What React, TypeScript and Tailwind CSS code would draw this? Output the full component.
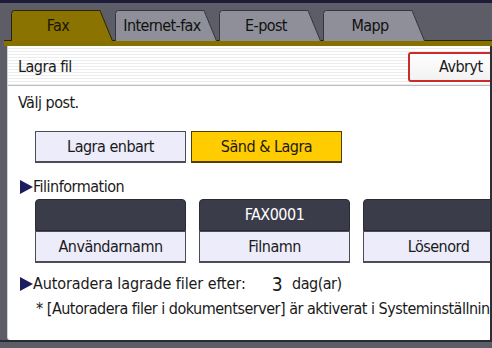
import React from "react";

const font = { fontFamily: '"DejaVu Sans Condensed", "Liberation Sans", sans-serif' };

function Tab({ label, active }: { label: string; active?: boolean }) {
  return (
    <div className="relative w-[102px] h-[30px] flex items-center justify-center pr-[8px]">
      <svg className="absolute inset-0" width="102" height="31" viewBox="0 0 102 31">
        <path
          d="M0.5 31 L0.5 3.5 Q0.5 0.5 3.5 0.5 L89 0.5 L101.5 31"
          fill={active ? "#8a7300" : "#8e8f98"}
          stroke={active ? "#2c2600" : "#35353d"}
          strokeWidth="1"
        />
      </svg>
      <span className={"relative text-[16px] leading-none pt-[2px] tracking-[-0.6px] " + (active ? "text-[#1a1600]" : "text-[#111]")}>{label}</span>
    </div>
  );
}

function Arrow() {
  return (
    <svg width="13" height="14" viewBox="0 0 13 14" className="shrink-0">
      <polygon points="0,0 13,7 0,14" fill="#1c1c60" />
    </svg>
  );
}

export default function App() {
  return (
    <div className="w-[492px] h-[348px] bg-[#5c5d66] overflow-hidden flex flex-col text-[#1a1a1a] tracking-[-0.5px]" style={font}>
      <div className="h-[3px] bg-[#1d1d3a] shrink-0" />
      <div className="h-[37px] shrink-0 flex items-end pl-[11px] gap-[2px]">
        <Tab label="Fax" active />
        <Tab label="Internet-fax" />
        <Tab label="E-post" />
        <Tab label="Mapp" />
      </div>
      <div className="h-[6px] shrink-0 ml-[4px] bg-[#857000] border-t border-[#2a2500]" />
      <div className="ml-[7px] w-[485px] h-[294px] shrink-0 bg-white border-l border-[#d0d0d8] border-r-2 border-r-[#2e2e34] overflow-hidden flex flex-col rounded-bl-[3px]">
        <div className="h-[40px] shrink-0 flex items-start bg-[repeating-linear-gradient(to_bottom,#ffffff_0px,#ffffff_2px,#ececec_2px,#ececec_3px)] border-b border-[#bdbdbd]">
          <div className="w-[400px] shrink-0 pl-[10px] pt-[11px] text-[16px] leading-[20px]">Lagra fil</div>
          <div className="mt-[6px] w-[104px] h-[30px] shrink-0 rounded-[3px] border-2 border-[#cc2b2b] bg-gradient-to-b from-white to-[#f2f2f2] flex items-center pl-[29px] text-[16px]">
            Avbryt
          </div>
        </div>
        <div className="pl-[10px] mt-[7px] text-[16px] leading-[20px]">Välj post.</div>
        <div className="flex gap-[5px] pl-[27px] mt-[18px]">
          <div className="w-[151px] h-[32px] border border-b-2 border-[#4c4c58] bg-[#ececfa] flex items-center justify-center text-[16px]">
            Lagra enbart
          </div>
          <div className="w-[151px] h-[32px] border border-b-2 border-[#4d4000] bg-[#ffcc00] flex items-center justify-center text-[16px]">
            Sänd &amp; Lagra
          </div>
        </div>
        <div className="flex items-center pl-[12px] mt-[14px] h-[20px] text-[16px]">
          <Arrow />
          <span>Filinformation</span>
        </div>
        <div className="flex gap-[13px] pl-[27px] mt-[2px]">
          {[
            ["", "Användarnamn"],
            ["FAX0001", "Filnamn"],
            ["", "Lösenord"],
          ].map(([v, l]) => (
            <div key={l} className="w-[151px] shrink-0 flex flex-col">
              <div className="h-[32px] rounded-t-[4px] bg-[#3b3c4a] border border-[#2a2a36] flex items-center justify-center text-white text-[16px]">
                {v}
              </div>
              <div className="h-[32px] border border-b-2 border-[#4c4c58] bg-[#ececfa] flex items-center justify-center text-[16px]">
                {l}
              </div>
            </div>
          ))}
        </div>
        <div className="flex items-center pl-[12px] mt-[11px] h-[20px] text-[16px]">
          <Arrow />
          <span className="tracking-[-0.1px]">Autoradera lagrade filer efter:</span>
          <span className="ml-[26px] text-[19px] font-light">3</span>
          <span className="ml-[10px]">dag(ar)</span>
        </div>
        <div className="pl-[28px] mt-[3px] h-[20px] text-[16px] whitespace-nowrap">
          * [Autoradera filer i dokumentserver] är aktiverat i Systeminställningar.
        </div>
      </div>
      <div className="h-[2px] bg-[#2a2a30] shrink-0" />
    </div>
  );
}
